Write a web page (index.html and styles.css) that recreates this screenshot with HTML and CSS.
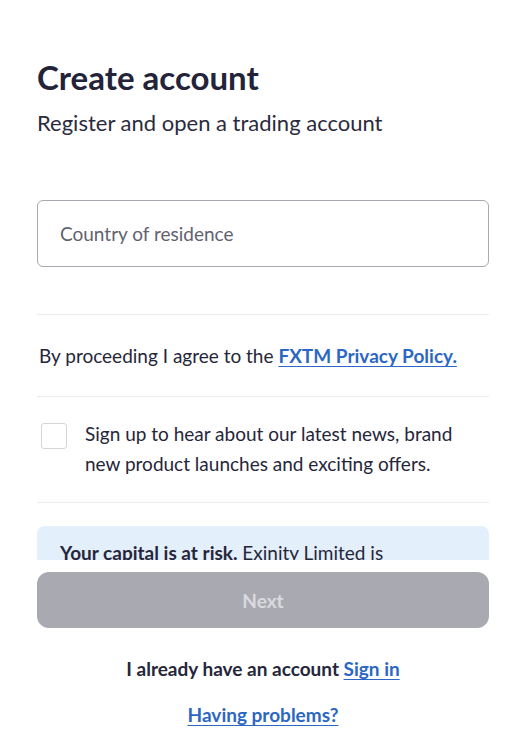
FILE: index.html
```html
<!DOCTYPE html>
<html lang="en">
<head>
    <meta charset="UTF-8">
    <meta name="viewport" content="width=device-width, initial-scale=1.0">
    <title>Create account</title>
    <link rel="stylesheet" href="styles.css">
</head>
<body>
<div class="page">
    <div class="scroll-area">
        <h1 class="title">Create account</h1>
        <p class="subtitle">Register and open a trading account</p>

        <div class="field">
            <span class="field-placeholder">Country of residence</span>
        </div>

        <div class="divider"></div>

        <p class="agree">By proceeding I agree to the <a href="#" class="link">FXTM Privacy Policy.</a></p>

        <div class="divider"></div>

        <label class="checkbox-row">
            <span class="checkbox"></span>
            <span class="checkbox-text">Sign up to hear about our latest news, brand new product launches and exciting offers.</span>
        </label>

        <div class="divider"></div>

        <div class="risk-box">
            <p><b>Your capital is at risk.</b> Exinity Limited is</p>
        </div>
    </div>

    <div class="footer">
        <button class="next-btn" disabled>Next</button>
        <p class="signin">I already have an account <a href="#" class="link">Sign in</a></p>
        <p class="problems"><a href="#" class="link">Having problems?</a></p>
    </div>
</div>
</body>
</html>
```

FILE: styles.css
```css
* {
    box-sizing: border-box;
}

body {
    margin: 0;
    background-color: #ffffff;
    font-family: "Lato", "Noto Sans", sans-serif;
    color: #26263a;
}

.page {
    width: 518px;
    height: 752px;
    display: flex;
    flex-direction: column;
}

.scroll-area {
    height: 560px;
    overflow: hidden;
    padding: 57px 29px 0 37px;
}

.title {
    margin: 0;
    font-size: 33px;
    font-weight: 700;
    line-height: 40px;
    color: #232339;
}

.subtitle {
    margin: 11px 0 0 0;
    font-size: 22px;
    line-height: 30px;
    color: #2b2b3d;
}

.field {
    margin-top: 62px;
    height: 67px;
    border: 1.5px solid #a9a9b1;
    border-radius: 6px;
    display: flex;
    align-items: center;
    padding: 0 22px;
}

.field-placeholder {
    font-size: 19px;
    color: #62626f;
}

.divider {
    height: 1px;
    background-color: #ececef;
}

.scroll-area .field + .divider {
    margin-top: 47px;
}

.agree {
    margin: 0;
    padding: 27px 2px 26px;
    font-size: 19px;
    line-height: 28px;
}

.link {
    color: #2b67c3;
    font-weight: 700;
    text-decoration: underline;
    text-underline-offset: 3px;
}

.checkbox-row {
    display: flex;
    gap: 18px;
    padding: 22px 0 23px 4px;
}

.checkbox {
    flex: none;
    width: 26px;
    height: 26px;
    margin-top: 4px;
    border: 1.5px solid #d5d5da;
    border-radius: 3px;
}

.checkbox-text {
    font-size: 19px;
    line-height: 30px;
}

.risk-box {
    margin-top: 23px;
    background-color: #e3effb;
    border-radius: 8px 8px 0 0;
    padding: 14px 23px 10px;
}

.risk-box p {
    margin: 0;
    font-size: 19px;
    line-height: 26px;
}

.footer {
    padding: 12px 29px 0 37px;
    text-align: center;
}

.next-btn {
    width: 100%;
    height: 56px;
    border: none;
    border-radius: 12px;
    background-color: #a9a9b1;
    color: #dadade;
    font-family: inherit;
    font-size: 19px;
    font-weight: 700;
}

.signin {
    margin: 28px 0 0 0;
    font-size: 19px;
    font-weight: 700;
    line-height: 26px;
}

.problems {
    margin: 20px 0 0 0;
    font-size: 19px;
    line-height: 26px;
}
```
